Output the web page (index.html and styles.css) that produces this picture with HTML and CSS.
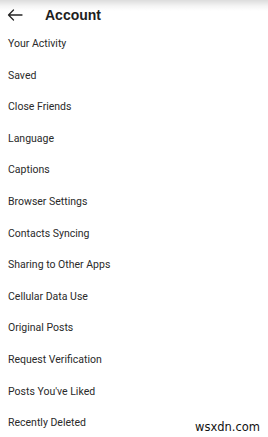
FILE: index.html
```html
<!DOCTYPE html>
<html>
<head>
<meta charset="utf-8">
<link rel="stylesheet" href="styles.css">
</head>
<body>
<div class="screen">
  <header class="topbar">
    <svg class="back" width="16" height="12" viewBox="0 0 16 12">
      <path d="M15 6H1.5M6.5 1L1.5 6L6.5 11" fill="none" stroke="#262626" stroke-width="1.3" stroke-linecap="round" stroke-linejoin="round"/>
    </svg>
    <h1 class="title">Account</h1>
  </header>
  <ul class="menu">
    <li class="item">Your Activity</li>
    <li class="item">Saved</li>
    <li class="item">Close Friends</li>
    <li class="item">Language</li>
    <li class="item">Captions</li>
    <li class="item">Browser Settings</li>
    <li class="item">Contacts Syncing</li>
    <li class="item">Sharing to Other Apps</li>
    <li class="item">Cellular Data Use</li>
    <li class="item">Original Posts</li>
    <li class="item">Request Verification</li>
    <li class="item">Posts You've Liked</li>
    <li class="item">Recently Deleted</li>
  </ul>
  <div class="watermark">wsxdn.com</div>
</div>
</body>
</html>
```
FILE: styles.css
```css
html, body {
  margin: 0;
  padding: 0;
  background: #fff;
}
.screen {
  position: relative;
  width: 268px;
  height: 437px;
  overflow: hidden;
  font-family: Roboto, "Liberation Sans", sans-serif;
  color: #262626;
  background: linear-gradient(to bottom, #dcdcdc 0px, #f4f4f4 6px, #ffffff 11px);
}
.topbar {
  display: flex;
  align-items: center;
  height: 30px;
  padding-left: 7px;
}
.back {
  display: block;
}
.title {
  margin: 0 0 0 22px;
  font-family: "Liberation Sans", Arial, sans-serif;
  font-size: 14px;
  font-weight: bold;
  color: #1e1e1e;
}
.menu {
  list-style: none;
  margin: 0;
  padding: 0;
}
.item {
  height: 31.6px;
  line-height: 27px;
  padding-left: 8px;
  font-size: 10.5px;
  color: #2a2a2a;
}
.watermark {
  position: absolute;
  left: 195px;
  top: 420px;
  font-family: "DejaVu Sans", sans-serif;
  font-size: 11.5px;
  color: #111;
}
```
